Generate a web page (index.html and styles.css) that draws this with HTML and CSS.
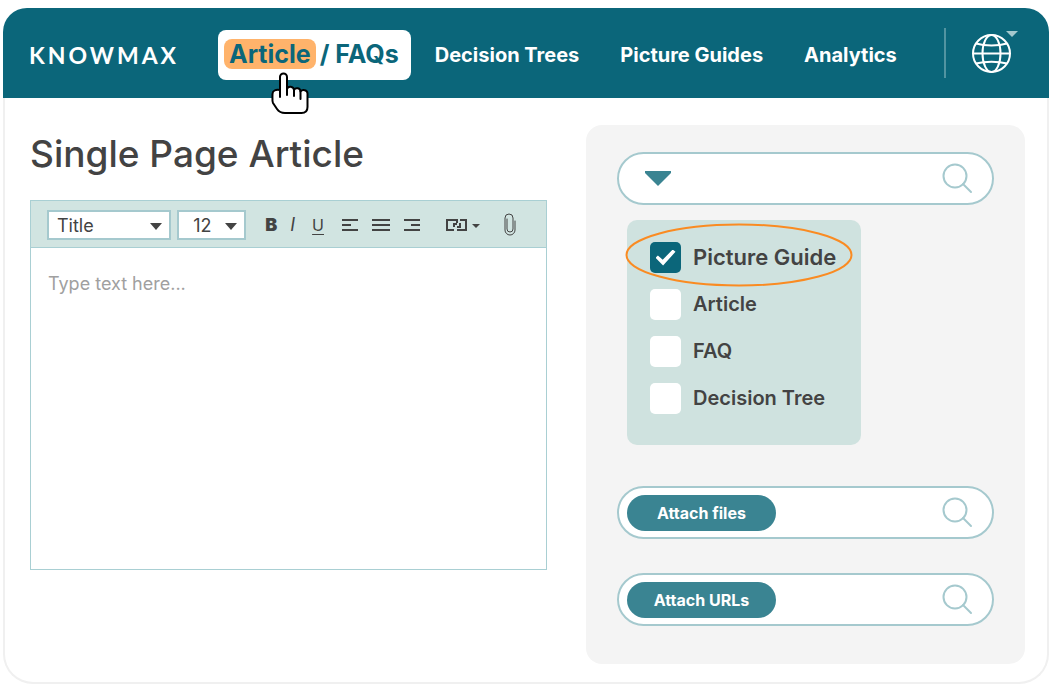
FILE: index.html
```html
<!DOCTYPE html>
<html lang="en">
<head>
  <meta charset="UTF-8" />
  <meta name="viewport" content="width=device-width, initial-scale=1" />
  <title>Knowmax - Single Page Article</title>
  <link rel="stylesheet" href="styles.css">
</head>
<body>

  <header class="header">
    <a class="logo" href="#">KNOWMAX</a>
    <nav class="nav">
      <a class="tab" href="#"><span class="tab-mark">Article</span><span>/ FAQs</span>
        <svg class="hand" viewBox="0 0 38 42" width="38" height="42">
          <path d="M9 25V5a3.500 3.500 0 0 1 7 0V17c1-3.500 6.500-3 7 1 1.500-3 6.500-2 6.500 1.500 2-2.500 7-1.500 7 2V35c0 3.500-2 6-6 6H14c-4 0-6-1-8-4l-4-6c-1-2-.500-5-.500-9 0-3 3-5 7.500-4z" fill="#fff" stroke="#000" stroke-width="2" stroke-linejoin="round"/>
          <path d="M16 16v7M23 17v7M29.500 19v8" fill="none" stroke="#000" stroke-width="2" stroke-linecap="round"/>
        </svg>
      </a>
      <div class="links">
        <a href="#">Decision Trees</a>
        <a href="#">Picture Guides</a>
        <a href="#">Analytics</a>
      </div>
    </nav>
    <button class="language" aria-label="Language">
      <svg viewBox="0 0 46 46" width="46" height="46" fill="none" stroke="#fff" stroke-width="2">
        <circle cx="19.500" cy="25.500" r="18.500"/>
        <ellipse cx="19.500" cy="25.500" rx="9" ry="18.500"/>
        <path d="M1 25.500h37M4 15.500c9 2.500 22 2.500 31 0M4 35.500c9-2.500 22-2.500 31 0"/>
        <path d="M34 3h12l-6 6z" fill="#a5c9ce" stroke="none"/>
      </svg>
    </button>
  </header>

  <main class="main">
    <section>
      <h1>Single Page Article</h1>
      <div class="editor">
        <div class="toolbar">
          <div class="select select-style">
            <select aria-label="Style"><option>Title</option></select>
            <svg viewBox="0 0 12 7" width="12" height="7"><path d="M0 0h12L6 7z" fill="#434343"/></svg>
          </div>
          <div class="select select-size">
            <select aria-label="Font size"><option>12</option></select>
            <svg viewBox="0 0 12 7" width="12" height="7"><path d="M0 0h12L6 7z" fill="#434343"/></svg>
          </div>
          <div class="tools">
            <button class="tool bold">B</button>
            <button class="tool italic">I</button>
            <button class="tool underline">U</button>
            <button class="tool" aria-label="Align left">
              <svg viewBox="0 0 18 12" width="18" height="12"><path d="M1 1h16M1 6h9M1 11h16" stroke="#434343" stroke-width="2"/></svg>
            </button>
            <button class="tool" aria-label="Justify">
              <svg viewBox="0 0 18 12" width="18" height="12"><path d="M0 1h18M0 6h18M0 11h18" stroke="#434343" stroke-width="2"/></svg>
            </button>
            <button class="tool" aria-label="Align right">
              <svg viewBox="0 0 18 12" width="18" height="12"><path d="M1 1h16M8 6h9M1 11h16" stroke="#434343" stroke-width="2"/></svg>
            </button>
          </div>
          <button class="tool" aria-label="Insert link">
            <svg viewBox="0 0 34 12" width="34" height="12">
              <path d="M11 4V1H1v10h7M8 8V5h3M11 11h9V1h-6M14 4v4h-3" fill="none" stroke="#434343" stroke-width="2"/>
              <path d="M26 5h8l-4 4z" fill="#434343"/>
            </svg>
          </button>
          <button class="tool attach" aria-label="Attach">
            <svg viewBox="0 0 12 24" width="12" height="24" fill="none" stroke="#434343" stroke-linecap="round">
              <path d="M3 6v10a2.500 2.500 0 0 0 6 0V5a4 4 0 0 0-8 0v12a5 5 0 0 0 10 0V8"/>
            </svg>
          </button>
        </div>
        <textarea placeholder="Type text here..." aria-label="Article text"></textarea>
      </div>
    </section>

    <aside class="sidebar">
      <div class="search">
        <button class="toggle" aria-label="Content types">
          <svg viewBox="0 0 28 15" width="28" height="15"><path d="M1 0h26v2L14 15 1 2z" fill="#3a8492"/></svg>
        </button>
        <input type="text" aria-label="Search content">
        <svg class="lens" viewBox="0 0 30 30" width="30" height="30"><circle cx="13" cy="12" r="11.500"/><path d="M21 20l8 8"/></svg>
      </div>

      <div class="types">
        <label class="main-type"><input type="checkbox" checked>Picture Guide
          <svg class="ring" viewBox="0 0 228 64" width="228" height="64"><ellipse cx="114" cy="32" rx="112.500" ry="30.500" fill="none" stroke="#fa8b22" stroke-width="2"/></svg>
        </label>
        <label><input type="checkbox">Article</label>
        <label><input type="checkbox">FAQ</label>
        <label><input type="checkbox">Decision Tree</label>
      </div>

      <div class="search">
        <button class="pill">Attach files</button>
        <input type="text" aria-label="Search files">
        <svg class="lens" viewBox="0 0 30 30" width="30" height="30"><circle cx="13" cy="12" r="11.500"/><path d="M21 20l8 8"/></svg>
      </div>
      <div class="search">
        <button class="pill">Attach URLs</button>
        <input type="text" aria-label="Search URLs">
        <svg class="lens" viewBox="0 0 30 30" width="30" height="30"><circle cx="13" cy="12" r="11.500"/><path d="M21 20l8 8"/></svg>
      </div>
    </aside>
  </main>

</body>
</html>
```

FILE: styles.css
```css
* {
  box-sizing: border-box;
}
body {
  margin: 8px 7px 8px 3px;
  font-family: Inter, "Open Sans", sans-serif;
  color: #434343;
  background: #fff;
}
button {
  font-family: inherit;
  color: inherit;
  padding: 0;
  border: none;
  background: none;
  cursor: pointer;
}
svg {
  display: block;
}
a {
  color: inherit;
  text-decoration: none;
}

/* header */
.header {
  display: flex;
  align-items: center;
  height: 90px;
  padding: 0 31px 0 26px;
  color: #fff;
  background: #0b667a;
  border-radius: 24px 24px 0 0;
}
.logo {
  width: 189px;
  padding-top: 4px;
  font-family: Lato, sans-serif;
  font-size: 23px;
  font-weight: 700;
  letter-spacing: 3px;
}
.nav {
  display: flex;
  align-items: center;
  flex: 1;
  gap: 24px;
  padding-top: 4px;
}
.tab {
  position: relative;
  display: flex;
  align-items: center;
  gap: 4px;
  height: 50px;
  padding: 0 12px 2px 6px;
  font-size: 25px;
  font-weight: 700;
  line-height: 30px;
  color: #0b667a;
  background: #fff;
  border-radius: 8px;
}
.tab-mark {
  padding: 0 5px;
  background: #ffb36b;
  border-radius: 8px;
}
.hand {
  position: absolute;
  left: 53px;
  top: 42px;
}
.links {
  display: flex;
  gap: 41px;
  font-size: 20px;
  font-weight: 700;
}
.language {
  display: flex;
  align-items: center;
  height: 50px;
  padding: 0 0 4px 26px;
  border-left: 2px solid #5294a1;
}

/* content */
.main {
  display: grid;
  grid-template-columns: minmax(0, 517fr) minmax(0, 439fr);
  gap: 39px;
  padding: 27px 22px 18px 25px;
  border: 2px solid #f0f0f0;
  border-top: none;
  border-radius: 0 0 30px 30px;
}
h1 {
  margin: 5px 0 22px;
  font-size: 37px;
  font-weight: 500;
  line-height: 48px;
}
.editor {
  border: 1px solid #a9cfd3;
}
.toolbar {
  display: flex;
  align-items: center;
  height: 47px;
  padding: 2px 30px 0 16px;
  background: #d1e4e1;
  border-bottom: 1px solid #a9cfd3;
}
.select {
  position: relative;
  margin-right: 6px;
}
.select select {
  width: 100%;
  height: 30px;
  padding: 0 8px;
  font-family: inherit;
  font-size: 18px;
  color: #434343;
  background: #fff;
  border: 2px solid #a5c9ce;
  border-radius: 0;
  appearance: none;
}
.select svg {
  position: absolute;
  right: 9px;
  top: 13px;
  pointer-events: none;
}
.select-style {
  width: 126px;
}
.select-size {
  width: 70px;
}
.select-size select {
  padding-left: 14px;
}
.tools {
  display: flex;
  align-items: center;
  gap: 13px;
  margin: 0 25px 0 13px;
}
.tool {
  font-size: 18px;
  line-height: 24px;
}
.bold {
  font-weight: 900;
}
.italic {
  font-style: italic;
}
.underline {
  margin: 0 4px;
  font-size: 16px;
  text-decoration: underline;
  text-underline-offset: 3px;
}
.attach {
  margin-left: 24px;
}
textarea {
  display: block;
  width: 100%;
  height: 321px;
  padding: 24px 17px;
  font-family: inherit;
  font-size: 18px;
  line-height: 24px;
  border: none;
  outline: none;
  resize: none;
}
textarea::placeholder {
  color: #a0a0a0;
}

/* sidebar */
.sidebar {
  padding: 27px 31px 38px;
  background: #f4f4f4;
  border-radius: 16px;
}
.search {
  display: flex;
  align-items: center;
  height: 53px;
  padding: 0 20px 0 8px;
  background: #fff;
  border: 2px solid #a5c9ce;
  border-radius: 27px;
}
.search + .search {
  margin-top: 34px;
}
.search input {
  flex: 1;
  min-width: 0;
  height: 36px;
  margin: 0 12px;
  font-family: inherit;
  font-size: 16px;
  background: none;
  border: none;
  outline: none;
}
.toggle {
  margin-left: 17px;
}
.lens {
  fill: none;
  stroke: #a5c9ce;
  stroke-width: 2;
  stroke-linecap: round;
  overflow: visible;
}
.pill {
  width: 149px;
  height: 36px;
  font-size: 16px;
  font-weight: 700;
  color: #fff;
  background: #3a8492;
  border-radius: 18px;
}
.types {
  display: flex;
  flex-direction: column;
  gap: 16px;
  width: 234px;
  margin: 15px 10px 41px;
  padding: 22px 0 31px 23px;
  background: #cfe2df;
  border-radius: 10px;
}
.types label {
  position: relative;
  display: flex;
  align-items: center;
  gap: 12px;
  font-size: 20px;
  font-weight: 600;
  line-height: 31px;
}
.types .main-type {
  font-size: 22px;
}
.types input {
  display: grid;
  place-items: center;
  width: 31px;
  height: 31px;
  margin: 0;
  background: #fff;
  border-radius: 5px;
  appearance: none;
}
.types input:checked {
  background: #0b667a;
}
.types input:checked::before {
  content: "";
  width: 20px;
  height: 16px;
  background: #fff;
  clip-path: polygon(0 52%, 12% 38%, 36% 64%, 86% 0, 100% 14%, 38% 100%);
}
.ring {
  position: absolute;
  left: -25px;
  top: -19px;
  pointer-events: none;
}
```
